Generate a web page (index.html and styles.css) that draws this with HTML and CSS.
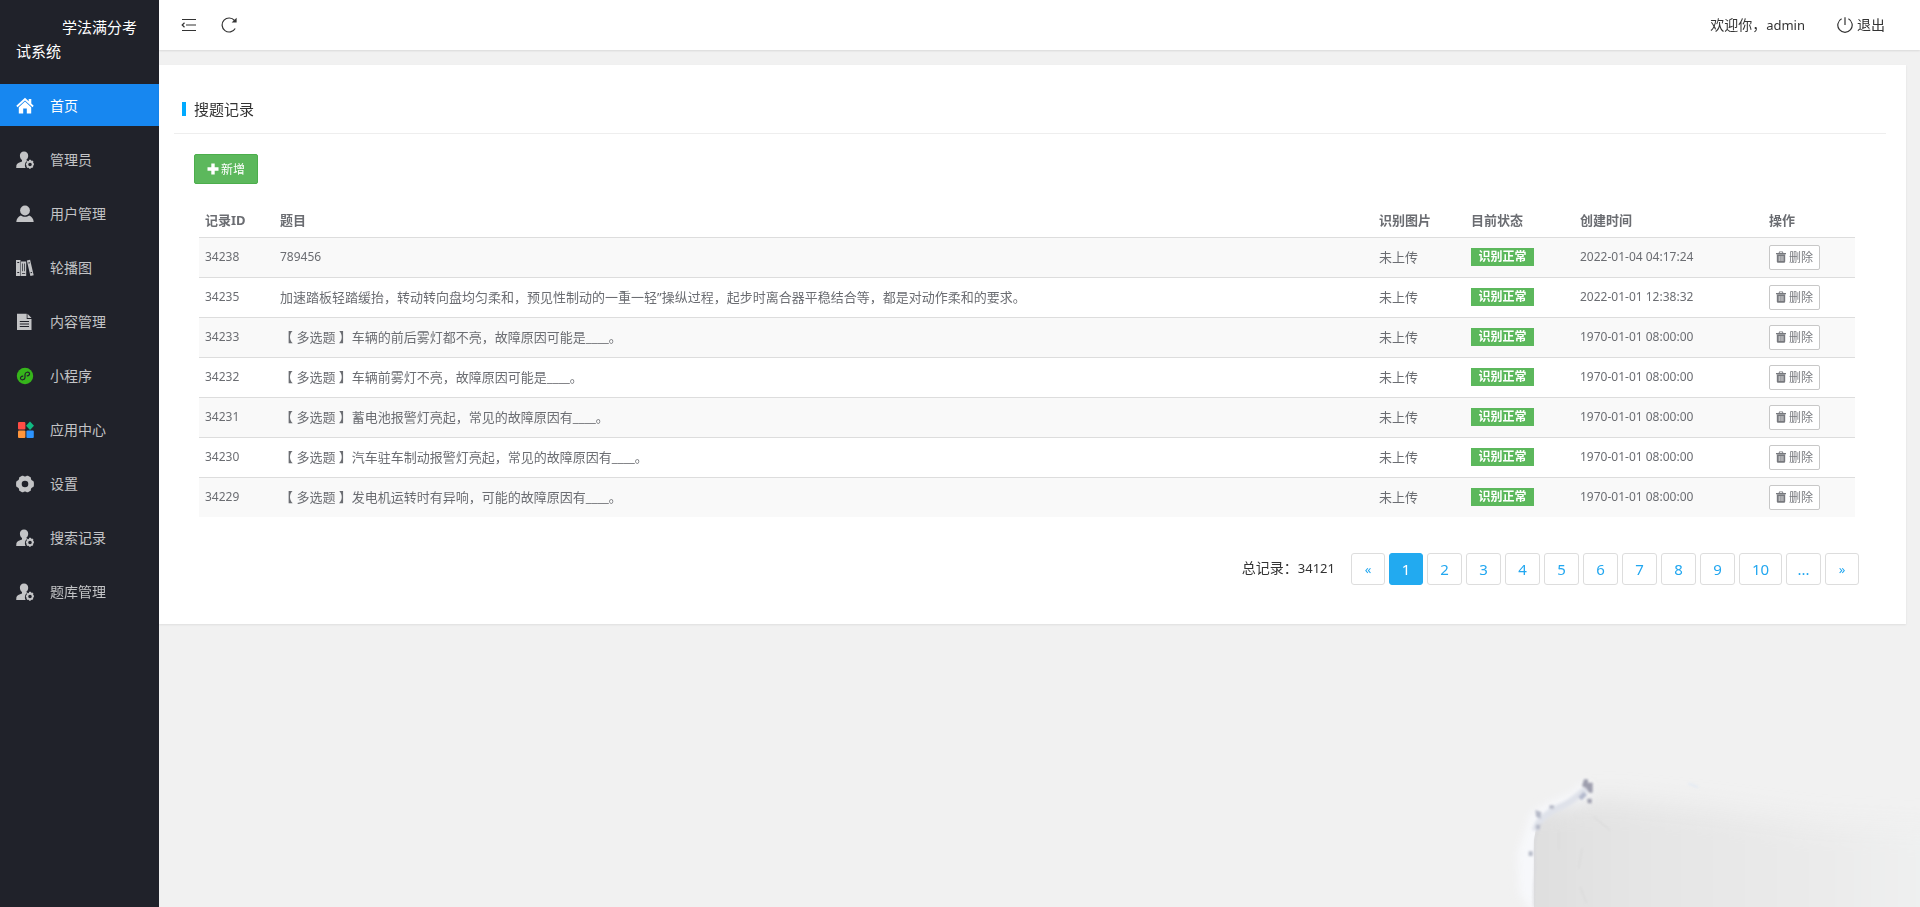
FILE: index.html
```html
<!DOCTYPE html>
<html lang="zh-CN">
<head>
<meta charset="utf-8">
<meta name="viewport" content="width=device-width, initial-scale=1">
<title>学法满分考试系统</title>
<link rel="stylesheet" href="styles.css">
</head>
<body>
<svg class="symbols" aria-hidden="true">
  <symbol id="i-home" viewBox="0 0 18 18"><path d="M9 .8.3 8.800l1.200 1.400L9 3.600l7.500 6.600 1.200-1.400-2.400-2.200V2h-2.600v2.200z"/><path d="M9 4.600 2.800 10.200V16.500h4.400v-4.900h3.600v4.900h4.400v-6.300z"/></symbol>
  <symbol id="i-admin" viewBox="0 0 18 18"><path d="M8 .6C5.400.6 3.900 2.400 3.900 4.800c0 1.700.8 3.400 2.100 4.300v1.400C3.300 11.500.8 12.200.4 14.200L.2 17h9.400a5 5 0 0 1-.7-2.900c0-1.900 1-3.500 2.500-4.400l-1.300-.6c1.300-.9 2.100-2.600 2.100-4.300C12.200 2.400 10.600.6 8 .6z"/><path fill-rule="evenodd" d="M13.200 8.800h1.600l.4 1 1.100-.3 1.200 1.300-.5 1 .9.600v1.900l-1 .5.4 1.100-1.300 1.200-1-.4-.4 1h-1.400l-.5-1-1.100.4-1.200-1.300.4-1-.9-.6v-1.700l1-.5-.4-1.100 1.200-1.100 1 .4zM14 11.700a1.800 1.800 0 1 0 0 3.600 1.800 1.800 0 0 0 0-3.600z"/></symbol>
  <symbol id="i-user" viewBox="0 0 18 18"><ellipse cx="9" cy="5.500" rx="4.900" ry="5"/><path d="M4.800 10.400c2.400 1.800 6 1.800 8.400 0 2.500 1 4.400 3.200 4.500 6.600H.3c.1-3.400 2-5.600 4.500-6.600z"/></symbol>
  <symbol id="i-books" viewBox="0 0 18 18"><path fill-rule="evenodd" d="M0 1h4.500v16H0zM1.300 3v1h1.900V3zm0 10v1h1.900v-1zM5 2.500h5.200V17H5zm1.300 2v7.800h.7V4.500zm1.900 0v7.800h.7V4.500zM6 14v.7h3.200V14zM10.800 1.500l3.300-.7L17.700 16.300l-3.300.7zm1.500 2 .2 1 1.500-.3-.2-1zm2.200 9.800.2 1 1.500-.3-.2-1z"/></symbol>
  <symbol id="i-file" viewBox="0 0 18 18"><path fill-rule="evenodd" d="M1 .8h9.700v5.200H15.500V17H1zM3.800 8v1h9.200V8zm0 2.500v1h9.200v-1zm0 2.500v1h9.200v-1z"/><path d="M11.500.8 15.500 5h-4z"/></symbol>
  <symbol id="i-mini" viewBox="0 0 18 18"><circle cx="9" cy="9" r="8.200" fill="#36b51b"/><path d="M6.800 9.200c-1.500.2-2.500 1-2.300 2.300.4 2.100 4.500 1.600 4.500-1V7.400c0-2.400 4-3 4.500-1 .3 1.300-.7 2.200-2.300 2.400" fill="none" stroke="#20222a" stroke-width="1.200" stroke-linecap="round"/></symbol>
  <symbol id="i-apps" viewBox="0 0 18 18"><rect x="2" y="1" width="7.400" height="7.400" rx="1" fill="#ff4d45"/><path d="m14 .6 4 4.200-4 4.200-4-4.200z" fill="#10ba82"/><rect x="2" y="9.600" width="7.400" height="7.400" rx="1" fill="#ff963c"/><rect x="10.400" y="9.600" width="7.400" height="7.400" rx="1" fill="#2c94ff"/></symbol>
  <symbol id="i-gear" viewBox="0 0 18 18"><path fill-rule="evenodd" d="M6 .8h1.200c.6 1 3 1 3.600 0H12l2.900 1.700c-.3 1.500.6 3.100 2.400 3.400.4.700.6 1.300.6 2v2.300c0 .7-.2 1.200-.6 1.900-1.800.3-2.700 1.900-2.400 3.400L12 17.200h-1.200c-.6-1-3-1-3.600 0H6l-2.900-1.700c.3-1.500-.6-3.100-2.400-3.400-.4-.7-.6-1.200-.6-1.900V7.900c0-.7.2-1.300.6-2 1.800-.3 2.700-1.900 2.400-3.400zM9 5.700a3.300 3.300 0 1 0 0 6.600 3.300 3.300 0 0 0 0-6.600z"/></symbol>
  <symbol id="i-trash" viewBox="0 0 10 12"><path fill-rule="evenodd" d="M3.200.5h3.600l.6 1.500H10v1.200H0V2h2.600zM3.900 1.300 3.600 2h2.800l-.3-.7zM.8 3.500h8.400v7q0 1.300-1.200 1.300H2Q.8 11.800.8 10.500zM2.800 5v5h.7V5zm1.900 0v5h.7V5zm1.900 0v5h.7V5z"/></symbol>
</svg>

<div class="app">
  <aside class="sidebar">
    <h1 class="brand">学法满分考试系统</h1>
    <nav class="menu" aria-label="主菜单">
      <a class="menu-item active" href="#"><svg class="menu-icon"><use href="#i-home"/></svg>首页</a>
      <a class="menu-item" href="#"><svg class="menu-icon"><use href="#i-admin"/></svg>管理员</a>
      <a class="menu-item" href="#"><svg class="menu-icon"><use href="#i-user"/></svg>用户管理</a>
      <a class="menu-item" href="#"><svg class="menu-icon"><use href="#i-books"/></svg>轮播图</a>
      <a class="menu-item" href="#"><svg class="menu-icon"><use href="#i-file"/></svg>内容管理</a>
      <a class="menu-item" href="#"><svg class="menu-icon"><use href="#i-mini"/></svg>小程序</a>
      <a class="menu-item" href="#"><svg class="menu-icon"><use href="#i-apps"/></svg>应用中心</a>
      <a class="menu-item" href="#"><svg class="menu-icon"><use href="#i-gear"/></svg>设置</a>
      <a class="menu-item" href="#"><svg class="menu-icon"><use href="#i-admin"/></svg>搜索记录</a>
      <a class="menu-item" href="#"><svg class="menu-icon"><use href="#i-admin"/></svg>题库管理</a>
    </nav>
  </aside>

  <div class="page">
    <header class="topbar">
      <button class="tool" type="button" aria-label="收起菜单"><svg width="16" height="16" viewBox="0 0 16 16"><path d="M1 2.500h14M5 8h10M1 13.500h14M3.500 5.800 1.200 8l2.300 2.200" fill="none" stroke="#333" stroke-width="1.200"/></svg></button>
      <button class="tool" type="button" aria-label="刷新"><svg width="16" height="16" viewBox="0 0 16 16"><path d="M13.500 3.500A7 7 0 1 0 14.200 11.500" fill="none" stroke="#333" stroke-width="1.200"/><path d="M15.600.8v4.700h-5z" fill="#333"/></svg></button>
      <span class="welcome">欢迎你，<span class="latin">admin</span></span>
      <a class="logout" href="#"><svg width="16" height="16" viewBox="0 0 16 16"><path d="M8 .2V8M4.600 1.800a7.200 7.200 0 1 0 6.800 0" fill="none" stroke="#333" stroke-width="1.200"/></svg>退出</a>
    </header>

    <main class="card">
      <h2 class="card-title">搜题记录</h2>
      <div class="card-body">
        <button class="add" type="button"><svg width="12" height="12" viewBox="0 0 12 12"><path d="M4.300.5h3.400v3.800h3.800v3.400H7.700v3.800H4.300V7.700H.5V4.300h3.800z" fill="#fff"/></svg>新增</button>
        <table class="records">
          <colgroup><col class="c-id"><col><col class="c-pic"><col class="c-state"><col class="c-time"><col class="c-act"></colgroup>
          <thead>
            <tr><th>记录ID</th><th>题目</th><th>识别图片</th><th>目前状态</th><th>创建时间</th><th>操作</th></tr>
          </thead>
          <tbody>
            <tr><td class="num">34238</td><td class="num">789456</td><td>未上传</td><td><span class="tag">识别正常</span></td><td class="num">2022-01-04 04:17:24</td><td><button class="del" type="button"><svg><use href="#i-trash"/></svg>删除</button></td></tr>
            <tr><td class="num">34235</td><td>加速踏板轻踏缓抬，转动转向盘均匀柔和，预见性制动的一重一轻”操纵过程，起步时离合器平稳结合等，都是对动作柔和的要求。</td><td>未上传</td><td><span class="tag">识别正常</span></td><td class="num">2022-01-01 12:38:32</td><td><button class="del" type="button"><svg><use href="#i-trash"/></svg>删除</button></td></tr>
            <tr><td class="num">34233</td><td>【 多选题 】车辆的前后雾灯都不亮，故障原因可能是____。</td><td>未上传</td><td><span class="tag">识别正常</span></td><td class="num">1970-01-01 08:00:00</td><td><button class="del" type="button"><svg><use href="#i-trash"/></svg>删除</button></td></tr>
            <tr><td class="num">34232</td><td>【 多选题 】车辆前雾灯不亮，故障原因可能是____。</td><td>未上传</td><td><span class="tag">识别正常</span></td><td class="num">1970-01-01 08:00:00</td><td><button class="del" type="button"><svg><use href="#i-trash"/></svg>删除</button></td></tr>
            <tr><td class="num">34231</td><td>【 多选题 】蓄电池报警灯亮起，常见的故障原因有____。</td><td>未上传</td><td><span class="tag">识别正常</span></td><td class="num">1970-01-01 08:00:00</td><td><button class="del" type="button"><svg><use href="#i-trash"/></svg>删除</button></td></tr>
            <tr><td class="num">34230</td><td>【 多选题 】汽车驻车制动报警灯亮起，常见的故障原因有____。</td><td>未上传</td><td><span class="tag">识别正常</span></td><td class="num">1970-01-01 08:00:00</td><td><button class="del" type="button"><svg><use href="#i-trash"/></svg>删除</button></td></tr>
            <tr><td class="num">34229</td><td>【 多选题 】发电机运转时有异响，可能的故障原因有____。</td><td>未上传</td><td><span class="tag">识别正常</span></td><td class="num">1970-01-01 08:00:00</td><td><button class="del" type="button"><svg><use href="#i-trash"/></svg>删除</button></td></tr>
          </tbody>
        </table>
        <div class="pager">
          <span class="total">总记录：<span class="latin">34121</span></span>
          <nav class="pages" aria-label="分页">
            <a class="pg arrow" href="#">«</a><a class="pg current" href="#">1</a><a class="pg" href="#">2</a><a class="pg" href="#">3</a><a class="pg" href="#">4</a><a class="pg" href="#">5</a><a class="pg" href="#">6</a><a class="pg" href="#">7</a><a class="pg" href="#">8</a><a class="pg" href="#">9</a><a class="pg wide" href="#">10</a><a class="pg" href="#">...</a><a class="pg arrow" href="#">»</a>
          </nav>
        </div>
      </div>
    </main>
  </div>
</div>

<svg class="smudge" viewBox="0 0 1320 501" aria-hidden="true">
  <defs>
    <linearGradient id="fade" x1="0" y1="0" x2="1" y2="0"><stop offset="0" stop-color="#dddddd"/><stop offset=".3" stop-color="#e5e5e5"/><stop offset=".7" stop-color="#ebebeb"/><stop offset="1" stop-color="#f1f3f3"/></linearGradient>
    <filter id="b2" x="-30%" y="-30%" width="160%" height="160%"><feGaussianBlur stdDeviation="3"/></filter>
    <filter id="b5" x="-30%" y="-30%" width="160%" height="160%"><feGaussianBlur stdDeviation="5"/></filter>
    <filter id="b8" x="-30%" y="-30%" width="160%" height="160%"><feGaussianBlur stdDeviation="12"/></filter>
    <filter id="b30" x="-30%" y="-60%" width="160%" height="220%"><feGaussianBlur stdDeviation="36"/></filter>
    <clipPath id="edge"><path d="M162 501V300l8-46 40-40 60-34 50-40 20-50h980v411z"/></clipPath>
  </defs>
  <path d="M170 540 118 460 112 340l40-120 50-30 70-30 50-40 20 60-120 90-40 60z" fill="#f7f8fb" filter="url(#b8)"/>
  <g clip-path="url(#edge)"><path d="M60 600V200l340-20 300 30 300 40 480 20v330z" fill="url(#fade)" filter="url(#b30)"/></g>
  <path d="M166 272c6-38 50-62 84-76 30-14 48-36 72-50" stroke="#dfe2ea" stroke-width="20" fill="none" filter="url(#b5)"/>
  <g filter="url(#b2)" fill="none">
    <path d="M162 500c-4-70 8-120 2-170 0-30 6-56 22-80" stroke="#d8d8dc" stroke-width="4"/>
    <path d="m300 176 16-16" stroke="#b4bacd" stroke-width="14"/>
    <path d="m296 385 10-60M300 440l20 50M340 230l50 40M236 270v60" stroke="#dadada" stroke-width="4"/>
    <path d="m625 130 30 12" stroke="#e2e9f3" stroke-width="6"/>
    <path d="M312 118h12v10h14v30h-10l-10-14-12-6zM322 176h13v14h-12z" fill="#9d9ead"/>
    <path d="M166 210l18 6-2 20-14-6zM208 196h14v10h-14zM168 254h12v14h-12zM146 334h12v14h-12z" fill="#b6bac8"/>
  </g>
</svg>
</body>
</html>
```
FILE: styles.css
```css
* { box-sizing: border-box; }

body {
  margin: 0;
  background: #f1f1f1;
  color: #333;
  font-family: "Noto Sans", "Noto Sans CJK SC", sans-serif;
  font-size: 14px;
  line-height: 20px;
}

a { color: inherit; text-decoration: none; }
button { font-family: inherit; cursor: pointer; }
.symbols { position: absolute; width: 0; height: 0; }
.latin { font-size: 13px; }

.app { display: flex; min-height: 100vh; }

/* Sidebar */
.sidebar { flex: none; width: 159px; background: #20222a; }
.brand {
  margin: 0;
  padding: 15px 16px 21px;
  color: #fff;
  font-size: 15px;
  font-weight: 400;
  line-height: 24px;
  text-indent: 46px;
}
.menu { display: flex; flex-direction: column; gap: 12px; }
.menu-item {
  display: flex;
  align-items: center;
  gap: 16px;
  height: 42px;
  padding: 1px 16px 0;
  color: #c3c4c6;
}
.menu-item.active { background: #1787f0; color: #fff; }
.menu-icon { width: 18px; height: 18px; fill: currentColor; }

/* Top bar */
.page { flex: 1; min-width: 0; }
.topbar {
  display: flex;
  align-items: center;
  height: 50px;
  padding: 0 35px 0 22px;
  background: #fff;
  box-shadow: 0 1px 2px rgba(0, 0, 0, 0.1);
}
.tool { display: flex; margin-right: 24px; padding: 0; border: 0; background: none; }
.welcome { margin-left: auto; }
.logout { display: flex; align-items: center; gap: 4px; margin-left: 32px; }

/* Card */
.card {
  margin: 15px 14px 0 0;
  padding: 24px 20px 39px 15px;
  background: #fff;
  box-shadow: 0 1px 2px rgba(0, 0, 0, 0.08);
}
.card-title {
  display: flex;
  align-items: center;
  gap: 8px;
  margin: 0;
  padding: 10px 8px 14px;
  border-bottom: 1px solid #eee;
  font-size: 15px;
  font-weight: 400;
}
.card-title::before { content: ""; width: 4px; height: 14px; background: #0af; }
.card-body { padding: 20px 31px 0 20px; }

.add {
  display: flex;
  align-items: center;
  gap: 2px;
  height: 30px;
  padding: 0 12px;
  border: 1px solid #4cae4c;
  border-radius: 2px;
  background: #5cb85c;
  color: #fff;
  font-size: 12px;
}

.records {
  width: calc(100% - 5px);
  margin: 20px 0 0 5px;
  border-collapse: collapse;
  table-layout: fixed;
  color: #6b6d72;
  font-size: 13px;
}
.c-id { width: 75px; }
.c-pic { width: 92px; }
.c-state { width: 109px; }
.c-time { width: 189px; }
.c-act { width: 92px; }
.records th { height: 33px; padding: 0 6px; text-align: left; font-weight: 700; }
.records td { height: 40px; padding: 0 6px; border-top: 1px solid #ddd; }
.records tbody tr:nth-child(odd) { background: #f9f9f9; }
.records .num { font-size: 12px; }
.tag {
  display: block;
  width: 63px;
  background: #5cb85c;
  color: #fff;
  font-size: 12px;
  font-weight: 700;
  line-height: 18px;
  text-align: center;
}
.del {
  display: flex;
  align-items: center;
  gap: 3px;
  height: 25px;
  padding: 0 6px;
  border: 1px solid #c8c8c8;
  border-radius: 2px;
  background: #fff;
  color: #77797e;
  font-size: 12px;
}
.del svg { width: 10px; height: 12px; fill: currentColor; }

/* Pagination */
.pager {
  display: flex;
  justify-content: flex-end;
  align-items: flex-start;
  gap: 16px;
  margin: 36px -4px 0 0;
}
.total { padding-top: 5px; }
.pages { display: flex; gap: 4px; }
.pg {
  min-width: 35px;
  border: 1px solid #ddd;
  border-radius: 3px;
  background: #fff;
  color: #22a7f0;
  font-size: 15px;
  line-height: 30px;
  text-align: center;
}
.pg.arrow,
.pg.current { min-width: 34px; }
.pg.arrow { font-size: 13px; }
.pg.wide { min-width: 43px; }
.pg.current { border-color: #22aaf0; background: #22aaf0; color: #fff; }

/* Ink wash behind the lower right corner */
.smudge {
  position: fixed;
  right: 0;
  bottom: 0;
  z-index: -1;
  width: 440px;
  height: 167px;
}
```
